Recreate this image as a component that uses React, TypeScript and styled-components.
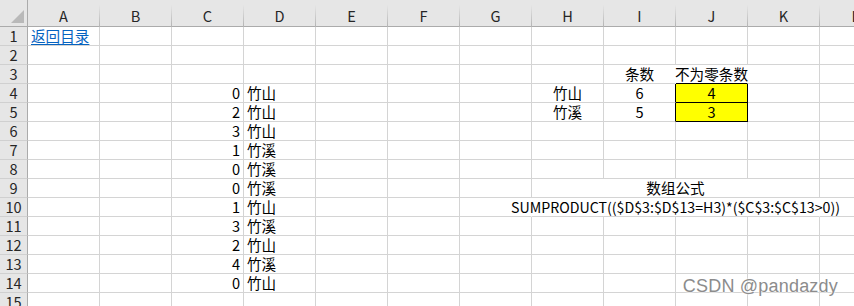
import React from "react";
import styled, { createGlobalStyle } from "styled-components";

const GlobalStyle = createGlobalStyle`
  html, body {
    margin: 0;
    padding: 0;
    background: #ffffff;
  }
  body {
    width: 854px;
    height: 306px;
    overflow: hidden;
    font-family: "Noto Sans CJK SC", "Noto Sans", sans-serif;
  }
`;

const COLS = ["A", "B", "C", "D", "E", "F", "G", "H", "I", "J", "K", "L"];
const ROW_COUNT = 15;

const Page = styled.div`
  position: relative;
  width: 854px;
  height: 306px;
  overflow: hidden;
  background: #ffffff;
`;

const Sheet = styled.div`
  display: grid;
  grid-template-columns: 28px repeat(${COLS.length}, 72px);
  grid-template-rows: 27px repeat(${ROW_COUNT}, 19px);
  font-size: 14.6px;
  color: #000000;
`;

const Corner = styled.div`
  position: relative;
  background: #e6e6e6;
  border-right: 1px solid #ababab;
  border-bottom: 1px solid #ababab;
  box-sizing: border-box;
`;

const CornerMark = styled.div`
  position: absolute;
  right: 3px;
  bottom: 3px;
  width: 0;
  height: 0;
  border-left: 13px solid transparent;
  border-bottom: 13px solid #b9b9b9;
`;

const ColHead = styled.div`
  display: flex;
  align-items: flex-end;
  justify-content: center;
  padding-bottom: 2px;
  box-sizing: border-box;
  background: #e6e6e6;
  border-right: 1px solid transparent;
  border-image: linear-gradient(to bottom, #e6e6e6 20%, #b0b0b0 100%) 1;
  border-image-width: 0 1px 0 0;
  font-size: 14.6px;
  color: #262626;
  line-height: 18px;
  box-shadow: inset 0 -1px 0 #ababab;
`;

const RowHead = styled.div`
  display: flex;
  align-items: flex-end;
  justify-content: center;
  box-sizing: border-box;
  background: #e6e6e6;
  border-right: 1px solid #ababab;
  border-bottom: 1px solid #d0d0d0;
  font-size: 14.6px;
  color: #262626;
  line-height: 18px;
`;

type Align = "left" | "right" | "center";

const Cell = styled.div<{
  $align: Align;
  $fill?: string;
  $right?: string;
  $bottom?: string;
  $span?: number;
}>`
  position: relative;
  display: flex;
  align-items: flex-end;
  justify-content: ${(p) =>
    p.$align === "right" ? "flex-end" : p.$align === "center" ? "center" : "flex-start"};
  grid-column: span ${(p) => p.$span ?? 1};
  box-sizing: border-box;
  padding: 0 3px;
  background: ${(p) => p.$fill ?? "transparent"};
  border-right: 1px solid ${(p) => p.$right ?? "#d4d4d4"};
  border-bottom: 1px solid ${(p) => p.$bottom ?? "#d4d4d4"};
  line-height: 18px;
  white-space: nowrap;
  overflow: visible;
`;

const CellText = styled.span`
  position: relative;
  z-index: 1;
`;

const Link = styled.span`
  color: #0563c1;
  text-decoration: underline;
  text-underline-offset: 2px;
`;

const Formula = styled.span`
  position: relative;
  z-index: 1;
  font-size: 14.2px;
`;

const Watermark = styled.div`
  position: absolute;
  right: 16px;
  bottom: 10px;
  font-family: "Liberation Sans", Arial, sans-serif;
  font-size: 18px;
  line-height: 20px;
  color: #8c8c8c;
  text-shadow: 0 0 2px #ffffff, 0 0 2px #ffffff;
  letter-spacing: 0.2px;
`;

type CellDef = {
  text: React.ReactNode;
  align: Align;
  fill?: string;
  right?: string;
  bottom?: string;
  span?: number;
};

const cData = [0, 2, 3, 1, 0, 0, 1, 3, 2, 4, 0];
const dData = ["竹山", "竹山", "竹山", "竹溪", "竹溪", "竹溪", "竹山", "竹溪", "竹山", "竹溪", "竹山"];

const cells: Record<string, CellDef> = {
  A1: { text: <Link>返回目录</Link>, align: "left" },
  I3: { text: "条数", align: "center", right: "transparent" },
  J3: { text: "不为零条数", align: "center", right: "transparent", bottom: "#000" },
  H4: { text: "竹山", align: "center" },
  I4: { text: "6", align: "center", right: "#000" },
  J4: { text: "4", align: "center", fill: "#ffff00", right: "#000", bottom: "#000" },
  H5: { text: "竹溪", align: "center" },
  I5: { text: "5", align: "center", right: "#000" },
  J5: { text: "3", align: "center", fill: "#ffff00", right: "#000", bottom: "#000" },
  H9: { text: "数组公式", align: "center", span: 4 },
  G10: { text: "", align: "left", right: "transparent" },
  H10: {
    text: <Formula>SUMPRODUCT(($D$3:$D$13=H3)*($C$3:$C$13&gt;0))</Formula>,
    align: "center",
    span: 4,
    right: "transparent",
  },
};

cData.forEach((v, i) => {
  cells[`C${i + 4}`] = { text: String(v), align: "right" };
  cells[`D${i + 4}`] = { text: dData[i], align: "left" };
});

export default function App() {
  const rows: React.ReactNode[] = [];
  for (let r = 1; r <= ROW_COUNT; r++) {
    rows.push(<RowHead key={`rh${r}`}>{r}</RowHead>);
    let skip = 0;
    COLS.forEach((c) => {
      if (skip > 0) {
        skip--;
        return;
      }
      const def = cells[`${c}${r}`];
      if (def?.span) skip = def.span - 1;
      rows.push(
        <Cell
          key={`${c}${r}`}
          $align={def?.align ?? "left"}
          $fill={def?.fill}
          $right={def?.right}
          $bottom={def?.bottom}
          $span={def?.span}
        >
          {def && <CellText>{def.text}</CellText>}
        </Cell>
      );
    });
  }

  return (
    <Page>
      <GlobalStyle />
      <Sheet>
        <Corner>
          <CornerMark />
        </Corner>
        {COLS.map((c) => (
          <ColHead key={c}>{c}</ColHead>
        ))}
        {rows}
      </Sheet>
      <Watermark>CSDN @pandazdy</Watermark>
    </Page>
  );
}
